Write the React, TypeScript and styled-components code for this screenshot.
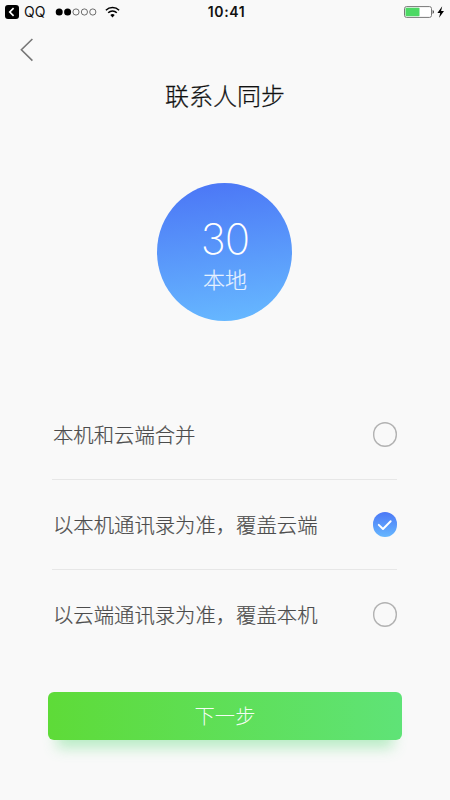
import React, { useState } from 'react';
import styled, { createGlobalStyle } from 'styled-components';

const GlobalStyle = createGlobalStyle`
  * { box-sizing: border-box; }
  body {
    margin: 0;
    background: #f9f9f9;
    font-family: "Noto Sans CJK SC", sans-serif;
  }
  svg { display: block; }
`;

const Screen = styled.main`
  width: 450px;
  height: 800px;
  overflow: hidden;
  display: flex;
  flex-direction: column;
  background: #f9f9f9;
`;

const StatusBar = styled.header`
  height: 24px;
  padding: 0 4px 0 5px;
  display: grid;
  grid-template-columns: 1fr auto 1fr;
  align-items: center;
  font-family: Inter, sans-serif;
  color: #111;
`;

const StatusGroup = styled.div<{ $end?: boolean }>`
  display: flex;
  align-items: center;
  justify-content: ${(p) => (p.$end ? 'flex-end' : 'flex-start')};
`;

const SourceApp = styled.span`
  width: 23px;
  margin: 0 8px 0 5px;
  font-size: 14px;
  line-height: 24px;
`;

const Clock = styled.time`
  padding-left: 2px;
  font-size: 14px;
  font-weight: 600;
  line-height: 24px;
  letter-spacing: 0.6px;
`;

const Signal = styled.svg`
  margin-right: 8px;
`;

const NavBar = styled.nav`
  height: 51px;
  padding: 13px 0 0 19px;
`;

const BackButton = styled.button`
  display: block;
  padding: 0;
  border: 0;
  background: none;
`;

const Title = styled.h1`
  margin: 0;
  height: 40px;
  text-align: center;
  font-size: 24px;
  font-weight: 300;
  line-height: 40px;
  color: #111;
  -webkit-text-stroke: 0.25px #111;
`;

const CounterDisc = styled.section`
  width: 135px;
  height: 138px;
  margin: 68px 0 0 157px;
  padding: 31px 0 0 1px;
  border-radius: 50%;
  background: linear-gradient(173deg, #4c78f6 5%, #66b7ff 95%);
  color: #fff;
  display: flex;
  flex-direction: column;
  align-items: center;
`;

const Count = styled.strong`
  font-family: Inter, sans-serif;
  font-size: 42px;
  font-weight: 250;
  line-height: 50px;
  letter-spacing: -1px;
`;

const CountLabel = styled.span`
  font-size: 22px;
  font-weight: 300;
  line-height: 32px;
  margin-top: -2px;
  opacity: 0.85;
  -webkit-text-stroke: 0.15px #fff;
`;

const Options = styled.div`
  margin: 69px 53px 0 52px;
`;

const Option = styled.label`
  height: 90px;
  padding-left: 1px;
  display: flex;
  align-items: center;
  justify-content: space-between;
  border-bottom: 1px solid #e7e7e7;
  &:last-child { border-bottom-color: transparent; }
`;

const OptionText = styled.span`
  padding-bottom: 2px;
  font-size: 20.35px;
  font-weight: 300;
  line-height: 30px;
  color: #4c4c4c;
  -webkit-text-stroke: 0.2px #4c4c4c;
`;

const HiddenRadio = styled.input`
  appearance: none;
  width: 0;
  height: 0;
  margin: 0;
`;

const RadioMark = styled.span<{ $on: boolean }>`
  width: 24.5px;
  height: 24.5px;
  margin-left: auto;
  margin-right: -0.2px;
  display: flex;
  align-items: center;
  justify-content: center;
  border-radius: 50%;
  box-shadow: ${(p) => (p.$on ? 'none' : 'inset 0 0 0 1.4px #b2b2b2')};
  background: ${(p) => (p.$on ? 'linear-gradient(#4c78f6, #66b7ff)' : 'transparent')};
`;

const NextButton = styled.button`
  width: 354px;
  height: 48px;
  margin: 32px 0 0 48px;
  padding: 0 0 2px;
  border: 0;
  border-radius: 6px;
  background: linear-gradient(90deg, #5edb38, #5fe377);
  box-shadow: 0 17px 14px -9px rgba(95, 220, 125, 0.42);
  color: rgba(255, 255, 255, 0.95);
  font-family: inherit;
  font-size: 20.35px;
  font-weight: 300;
  line-height: 46px;
`;

const choices = ['本机和云端合并', '以本机通讯录为准，覆盖云端', '以云端通讯录为准，覆盖本机'];

const signalDots = [0, 1, 2, 3, 4];

export default function App() {
  const [selected, setSelected] = useState(1);

  return (
    <>
      <GlobalStyle />
      <Screen>
        <StatusBar>
          <StatusGroup>
            <svg width="14" height="14" viewBox="0 0 14 14">
              <rect width="14" height="14" rx="3" fill="#000" />
              <path d="M8.6 3.2 4.8 7l3.8 3.8" fill="none" stroke="#fff" strokeWidth="1.7" />
            </svg>
            <SourceApp>QQ</SourceApp>
            <Signal width="42" height="8" viewBox="0 0 42 8">
              {signalDots.map((i) => (
                <circle
                  key={i}
                  cx={4.2 + i * 8.4}
                  cy="4"
                  r={i < 2 ? 3.5 : 3.1}
                  fill={i < 2 ? '#000' : 'none'}
                  stroke={i < 2 ? 'none' : '#333'}
                  strokeWidth="0.7"
                />
              ))}
            </Signal>
            <svg width="15" height="12" viewBox="0 0 15 12">
              <path d="M.9 4.3a9.4 9.4 0 0 1 13.2 0M3.2 6.8a6.1 6.1 0 0 1 8.6 0" fill="none" stroke="#000" strokeWidth="1.5" />
              <path d="M5.3 9a3.2 3.2 0 0 1 4.4 0l-2.2 2.4z" fill="#000" />
            </svg>
          </StatusGroup>
          <Clock>10:41</Clock>
          <StatusGroup $end>
            <svg width="42" height="14" viewBox="0 0 42 14">
              <rect x=".5" y="1.6" width="27" height="10.8" rx="2" fill="#fff" stroke="#777" />
              <rect x="1.5" y="2.7" width="14" height="8.6" rx=".8" fill="#4cd964" />
              <path d="M28.7 5.1c1.5.5 1.5 3.3 0 3.8z" fill="#222" />
              <path d="M38.2 1.3 33.4 7.9h2.8L35.1 12.7 40 6.1h-2.9z" fill="#000" />
            </svg>
          </StatusGroup>
        </StatusBar>
        <NavBar>
          <BackButton aria-label="返回">
            <svg width="16" height="26" viewBox="0 0 16 26">
              <path d="M13.4 2 2.4 12.8 13.4 23.6" fill="none" stroke="#777" strokeWidth="1.6" />
            </svg>
          </BackButton>
        </NavBar>
        <Title>联系人同步</Title>
        <CounterDisc>
          <Count>30</Count>
          <CountLabel>本地</CountLabel>
        </CounterDisc>
        <Options>
          {choices.map((text, i) => (
            <Option key={text}>
              <OptionText>{text}</OptionText>
              <HiddenRadio type="radio" name="sync" checked={selected === i} onChange={() => setSelected(i)} />
              <RadioMark $on={selected === i}>
                {selected === i && (
                  <svg width="24" height="24" viewBox="0 0 25 25">
                    <path d="m6 12.3 4.4 4.4 8-8.1" fill="none" stroke="#fff" strokeWidth="2" strokeLinecap="round" strokeLinejoin="round" />
                  </svg>
                )}
              </RadioMark>
            </Option>
          ))}
        </Options>
        <NextButton>下一步</NextButton>
      </Screen>
    </>
  );
}
